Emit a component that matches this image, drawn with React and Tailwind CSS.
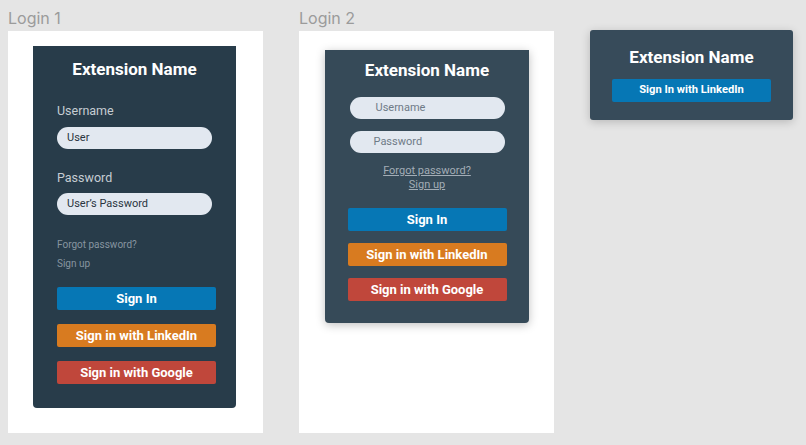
import React from 'react'

const roboto = { fontFamily: 'Roboto, "Liberation Sans", sans-serif' }

function Btn({ children, className }) {
  return (
    <div className={`w-[159px] h-[23px] rounded-[2px] flex items-center justify-center text-white font-bold ${className}`}>
      {children}
    </div>
  )
}

function Frame({ label, children }) {
  return (
    <div className="flex flex-col">
      <div className="h-[23px] text-[16px] leading-[20px] text-[#9b9b9b] font-['Inter',sans-serif]">{label}</div>
      <div className="w-[255px] h-[402px] bg-white">{children}</div>
    </div>
  )
}

export default function App() {
  return (
    <div className="w-[806px] h-[445px] bg-[#e5e5e5] overflow-hidden flex pl-[8px] pt-[8px] gap-[36px]" style={roboto}>
      {/* Login 1 */}
      <Frame label="Login 1">
        <div className="ml-[25px] mt-[15px] w-[203px] h-[362px] bg-[#283c4a] rounded-b-[4px] flex flex-col pl-[24px] pt-[11px]">
          <div className="text-[17px] leading-[24px] font-bold text-white text-center -ml-[24px]">Extension Name</div>
          <div className="mt-[20px] text-[12.5px] leading-[20px] text-[#c6cdd3]">Username</div>
          <div className="mt-[6px] w-[155px] h-[22px] rounded-full bg-[#e2e8f0] flex items-center pl-[10px] text-[11px] text-[#2a3540]">User</div>
          <div className="mt-[19px] text-[12.5px] leading-[20px] text-[#c6cdd3]">Password</div>
          <div className="mt-[5px] w-[155px] h-[22px] rounded-full bg-[#e2e8f0] flex items-center pl-[10px] text-[11px] text-[#2a3540]">User’s Password</div>
          <div className="mt-[23px] text-[10px] leading-[14px] text-[#8795a0]">Forgot password?</div>
          <div className="mt-[5px] text-[10px] leading-[14px] text-[#8795a0]">Sign up</div>
          <div className="mt-[16px] flex flex-col gap-[14px]">
            <Btn className="bg-[#0677b5] text-[13px]">Sign In</Btn>
            <Btn className="bg-[#d87b20] text-[13px]">Sign in with LinkedIn</Btn>
            <Btn className="bg-[#c0473b] text-[13px]">Sign in with Google</Btn>
          </div>
        </div>
      </Frame>

      {/* Login 2 */}
      <Frame label="Login 2">
        <div className="ml-[26px] mt-[19px] w-[204px] h-[273px] bg-[#364a58] rounded-b-[4px] shadow-[0_2px_10px_rgba(0,0,0,0.25)] flex flex-col items-center pt-[8px]">
          <div className="text-[17px] leading-[24px] font-bold text-white">Extension Name</div>
          <div className="mt-[15px] w-[155px] h-[22px] rounded-full bg-[#e2e8f0] flex items-center pl-[26px] text-[11px] text-[#6f7b87]">Username</div>
          <div className="mt-[12px] w-[155px] h-[22px] rounded-full bg-[#e2e8f0] flex items-center pl-[24px] text-[11px] text-[#6f7b87]">Password</div>
          <div className="mt-[11px] text-[11px] leading-[13px] text-[#a3adb6] underline">Forgot password?</div>
          <div className="mt-[1px] text-[11px] leading-[13px] text-[#a3adb6] underline">Sign up</div>
          <div className="mt-[17px] flex flex-col gap-[12px]">
            <Btn className="bg-[#0677b5] text-[13px]">Sign In</Btn>
            <Btn className="bg-[#d87b20] text-[13px]">Sign in with LinkedIn</Btn>
            <Btn className="bg-[#c0473b] text-[13px]">Sign in with Google</Btn>
          </div>
        </div>
      </Frame>

      {/* Popup */}
      <div className="mt-[22px]">
        <div className="w-[203px] h-[90px] bg-[#374b5a] rounded-[3px] shadow-[0_2px_10px_rgba(0,0,0,0.2)] flex flex-col items-center pt-[15px]">
          <div className="text-[17px] leading-[24px] font-bold text-white">Extension Name</div>
          <Btn className="mt-[10px] bg-[#0677b5] text-[11.2px]">Sign In with LinkedIn</Btn>
        </div>
      </div>
    </div>
  )
}
